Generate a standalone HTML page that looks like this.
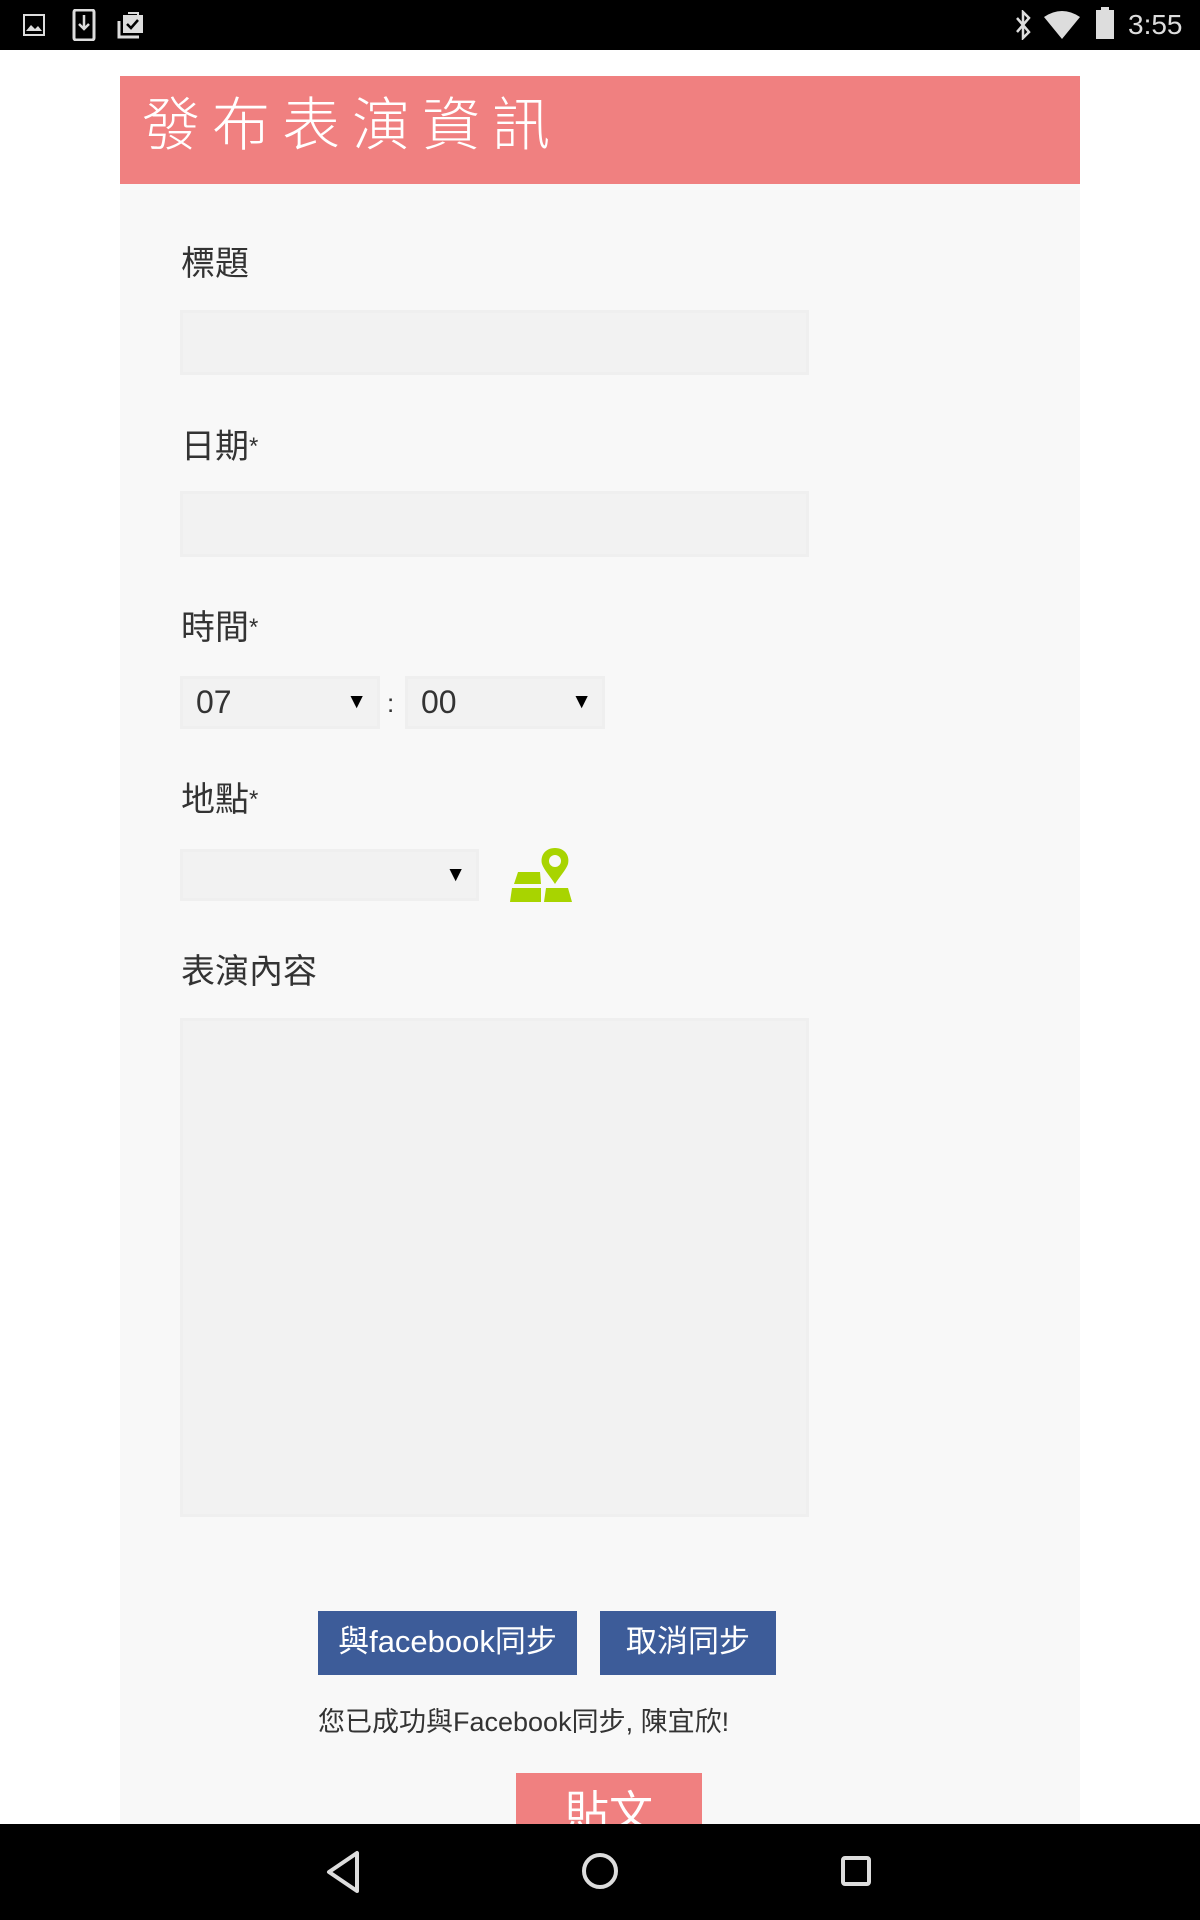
<!DOCTYPE html>
<html><head><meta charset="utf-8"><style>
*{margin:0;padding:0;box-sizing:border-box}
body{width:1200px;height:1920px;background:#fff;position:relative;overflow:hidden;font-family:"Liberation Sans","Noto Sans CJK TC",sans-serif;color:#333}
.abs{position:absolute}
.status{left:0;top:0;width:1200px;height:50px;background:#000}
.hdr{left:120px;top:76px;width:960px;height:108px;background:#f08080;color:#fff;font-size:58px;letter-spacing:12px;padding:10px 0 0 22px;line-height:80px;font-weight:300}
.panel{left:120px;top:184px;width:960px;height:1700px;background:#f8f8f8}
.lbl{font-size:34px;left:181px;line-height:40px;color:#333}
.inp{background:#f2f2f2;border:3px solid #efefef}
.sel{font-size:32px;line-height:46px;padding-left:13px;color:#333}
.arr{position:absolute;right:10px;top:0;font-size:21px;color:#000}
.btn{background:#3d5c99;color:#fff;font-size:31px;text-align:center;line-height:62px}
.nav{left:0;top:1824px;width:1200px;height:96px;background:#000}
</style></head><body>
<div class="abs status">
<svg class="abs" style="left:22px;top:13px" width="24" height="24" viewBox="0 0 24 24"><rect x="2" y="2" width="20" height="20" fill="none" stroke="#ddd" stroke-width="2"/><path d="M4 18 L9 12 L13 16 L16 13 L20 18Z" fill="#ddd"/></svg>
<svg class="abs" style="left:72px;top:9px" width="24" height="32" viewBox="0 0 24 32"><rect x="2" y="1" width="20" height="30" rx="2" fill="none" stroke="#ddd" stroke-width="3"/><path d="M12 6 V20 M7 15 L12 20 L17 15" stroke="#ddd" stroke-width="2.5" fill="none"/></svg>
<svg class="abs" style="left:117px;top:9px" width="30" height="30" viewBox="0 0 30 30"><rect x="6" y="6" width="20" height="18" fill="#ddd"/><path d="M2 12 V28 H22" stroke="#ddd" stroke-width="3" fill="none"/><path d="M11 4 h10 v4" stroke="#ddd" stroke-width="2" fill="none"/><path d="M10 15 L14 19 L21 11" stroke="#000" stroke-width="2.5" fill="none"/></svg>
<svg class="abs" style="left:1013px;top:10px" width="20" height="30" viewBox="0 0 20 30"><path d="M4 8 L16 22 L10 28 V2 L16 8 L4 22" stroke="#ddd" stroke-width="2.5" fill="none"/></svg>
<svg class="abs" style="left:1044px;top:11px" width="36" height="28" viewBox="0 0 36 28"><path d="M0 6 Q18 -6 36 6 L18 28Z" fill="#ddd"/></svg>
<div class="abs" style="left:1096px;top:10px;width:18px;height:29px;background:#ddd"></div>
<div class="abs" style="left:1101px;top:7px;width:8px;height:4px;background:#ddd"></div>
<div class="abs" style="left:1128px;top:8px;font-size:28px;color:#ddd;line-height:34px">3:55</div>
</div>
<div class="abs hdr">發布表演資訊</div>
<div class="abs panel"></div>
<div class="abs lbl" style="top:244px">標題</div>
<div class="abs inp" style="left:180px;top:310px;width:629px;height:65px"></div>
<div class="abs lbl" style="top:427px">日期<span style="font-size:24px;vertical-align:top">*</span></div>
<div class="abs inp" style="left:180px;top:491px;width:629px;height:66px"></div>
<div class="abs lbl" style="top:608px">時間<span style="font-size:24px;vertical-align:top">*</span></div>
<div class="abs inp sel" style="left:180px;top:676px;width:200px;height:53px">07<span class="arr">▼</span></div>
<div class="abs" style="left:387px;top:688px;font-size:26px">:</div>
<div class="abs inp sel" style="left:405px;top:676px;width:200px;height:53px">00<span class="arr">▼</span></div>
<div class="abs lbl" style="top:780px">地點<span style="font-size:24px;vertical-align:top">*</span></div>
<div class="abs inp sel" style="left:180px;top:849px;width:299px;height:52px"><span class="arr">▼</span></div>
<svg class="abs" style="left:510px;top:846px" width="64" height="60" viewBox="0 0 64 60"><path d="M8 26 H30 L31 38 H4Z M2 42 H31 L31 56 H0Z M36 42 L58 42 L62 56 H34Z" fill="#a8d400"/><path d="M45 2 C55 2 60 10 58 18 C56 24 50 30 45 38 C40 30 34 24 32 18 C30 10 35 2 45 2Z" fill="#a8d400"/><circle cx="45" cy="15" r="6" fill="#f8f8f8"/></svg>
<div class="abs lbl" style="top:952px">表演內容</div>
<div class="abs inp" style="left:180px;top:1018px;width:629px;height:499px"></div>
<div class="abs btn" style="left:318px;top:1611px;width:259px;height:64px">與facebook同步</div>
<div class="abs btn" style="left:600px;top:1611px;width:176px;height:64px">取消同步</div>
<div class="abs" style="left:318px;top:1704px;font-size:27px;line-height:36px;color:#333">您已成功與Facebook同步, 陳宜欣!</div>
<div class="abs" style="left:516px;top:1773px;width:186px;height:51px;background:#f08080;color:#fff;font-size:44px;text-align:center;line-height:80px;overflow:hidden">貼文</div>
<div class="abs nav">
<svg class="abs" style="left:325px;top:26px" width="36" height="44" viewBox="0 0 36 44"><path d="M32 3 V41 L4 22Z" fill="none" stroke="#ddd" stroke-width="4" stroke-linejoin="round"/></svg>
<svg class="abs" style="left:580px;top:27px" width="40" height="40" viewBox="0 0 40 40"><circle cx="20" cy="20" r="16" fill="none" stroke="#ddd" stroke-width="4"/></svg>
<svg class="abs" style="left:840px;top:31px" width="32" height="32" viewBox="0 0 32 32"><rect x="3" y="3" width="26" height="26" rx="2" fill="none" stroke="#ddd" stroke-width="4"/></svg>
</div>
</body></html>
